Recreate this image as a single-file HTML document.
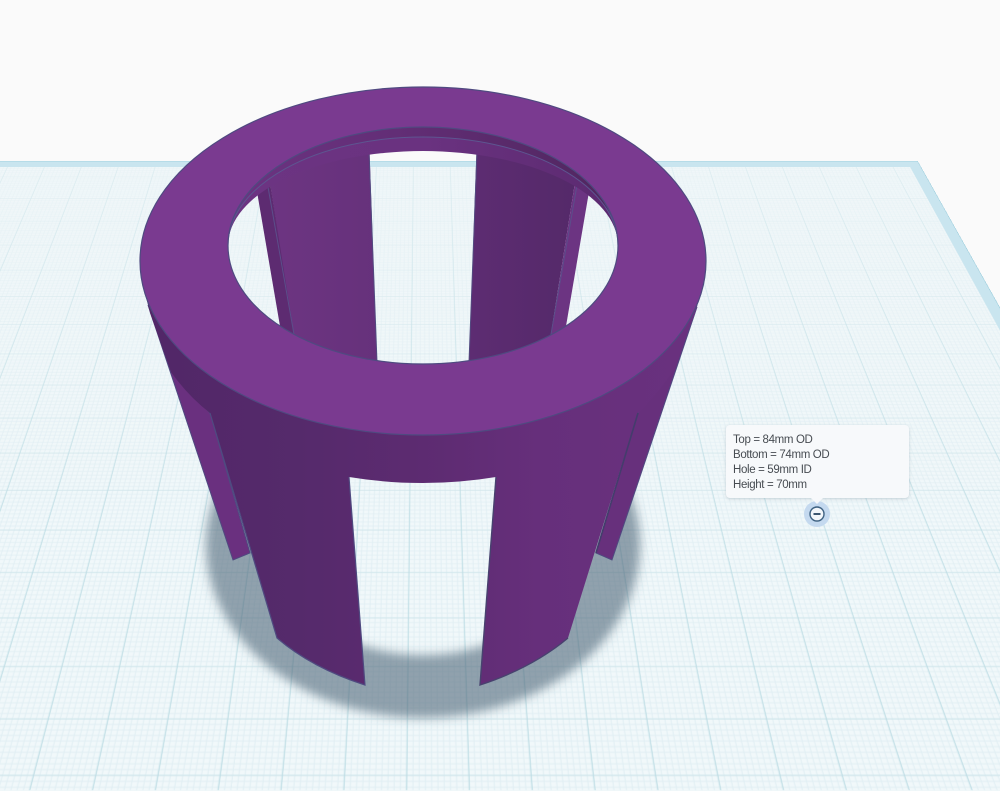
<!DOCTYPE html>
<html><head><meta charset="utf-8"><style>
html,body{margin:0;padding:0;width:1000px;height:791px;overflow:hidden;background:#fafafa}
#s{position:relative;width:1000px;height:791px;overflow:hidden;background:#fafafa}
#w{position:absolute;left:0;top:0;width:0;height:0;transform-origin:0 0;
transform:matrix3d(.62182,0,0,0, -.16597,.28251,0,-.00039238, 0,0,1,0, 423,176.86,0,1)}
#p{position:absolute;left:-1200px;top:-45.6px;width:2010px;height:1081px;background:#c9e5ef;box-sizing:border-box;border-top:2.5px solid #a9d5e3;border-right:1.6px solid #9fcfdd}
#g{position:absolute;left:-1200px;top:-27.6px;width:1992px;height:1063px;background-color:#f1f8fa;
background-image:
linear-gradient(90deg,#b9dbe3 0,#b9dbe3 1px,transparent 1px),
linear-gradient(180deg,#cde4ea 0,#cde4ea 1.1px,transparent 1.1px),
linear-gradient(90deg,#e0eef3 0,#e0eef3 1px,transparent 1px),
linear-gradient(180deg,#e0eef3 0,#e0eef3 1px,transparent 1px);
background-size:60px 60px,60px 60px,6px 6px,6px 6px;
background-position:43.8px 0,0 27.6px,1.8px 0,0 3.6px}
#e{position:absolute;left:0;top:788px;width:1000px;height:3px;background:#eff7f9}
svg{position:absolute;left:0;top:0}
#t{position:absolute;left:726px;top:425px;width:176px;height:73px;padding:0 0 0 7px;background:#f7f9fb;border-radius:4px;box-shadow:0 1px 3px rgba(60,80,100,.22);font:11.5px/15px "Liberation Sans",sans-serif;color:#474c52;letter-spacing:-.35px;box-sizing:content-box}
#t div:first-child{margin-top:8px}
#t div{white-space:nowrap}
</style></head><body><div id="s">
<div id="e"></div>
<div id="w"><div id="p"></div><div id="g"></div></div>
<svg width="1000" height="791" viewBox="0 0 1000 791">
<defs>
<filter id="b" x="-20%" y="-20%" width="140%" height="140%"><feGaussianBlur stdDeviation="5"/></filter>
<linearGradient id="fog" x1="0" y1="0" x2="0" y2="1"><stop offset="0" stop-color="#eef5f7" stop-opacity=".55"/><stop offset="1" stop-color="#eef5f7" stop-opacity="0"/></linearGradient>
<linearGradient id="fr" gradientUnits="userSpaceOnUse" x1="170" y1="0" x2="680" y2="0">
<stop offset="0" stop-color="#522768"/><stop offset=".25" stop-color="#552a6b"/><stop offset=".5" stop-color="#5d2b71"/><stop offset=".72" stop-color="#662f7b"/><stop offset="1" stop-color="#69317e"/></linearGradient>
<linearGradient id="il" gradientUnits="userSpaceOnUse" x1="265" y1="0" x2="380" y2="0"><stop offset="0" stop-color="#6d3582"/><stop offset="1" stop-color="#66317b"/></linearGradient>
<linearGradient id="ir" gradientUnits="userSpaceOnUse" x1="470" y1="0" x2="580" y2="0"><stop offset="0" stop-color="#5d2c72"/><stop offset="1" stop-color="#542969"/></linearGradient>
<linearGradient id="l1" gradientUnits="userSpaceOnUse" x1="228" y1="0" x2="618" y2="0"><stop offset="0" stop-color="#6b3381"/><stop offset=".4" stop-color="#632e77"/><stop offset="1" stop-color="#50265f"/></linearGradient>
<linearGradient id="l2" gradientUnits="userSpaceOnUse" x1="228" y1="0" x2="618" y2="0"><stop offset="0" stop-color="#6c3482"/><stop offset=".5" stop-color="#6a3280"/><stop offset="1" stop-color="#5b2a70"/></linearGradient>
<clipPath id="h"><ellipse cx="423" cy="245.5" rx="195" ry="118.5"/></clipPath>
<clipPath id="sc"><rect x="0" y="410" width="1000" height="381"/></clipPath>
</defs>
<path d="M0,167L910,167L1000,330L1000,520L0,520Z" fill="url(#fog)"/>
<g clip-path="url(#sc)"><path fill="#4a6276" fill-opacity=".58" fill-rule="evenodd" filter="url(#b)" d="M206,545a217,173 0 1 0 434,0a217,173 0 1 0 -434,0ZM253,510a170,145 0 1 0 340,0a170,145 0 1 0 -340,0Z"/></g>
<path d="M148,305L233,560L250,553L210,413L172,372Z" fill="#6a307f" stroke="#4f4a80" stroke-width="1"/>
<path d="M697,307L612,560L596,553L638,413Z" fill="#67307c" stroke="#4f4a80" stroke-width="1"/>
<path d="M143,285L150,313L171,372Q188,396 210,413L277,638Q312,668 365,685L349,477Q423,489 496,477L480,685Q532,668 568,638L638,413Q660,392 675,368L697,307L706,265L663,255A240,146 0 0 1 183,255Z" fill="url(#fr)"/>
<path d="M210,413L277,638Q312,668 365,685L349,477" fill="none" stroke="#4f4a80" stroke-width="1.2"/>
<path d="M496,477L480,685Q532,668 568,638" fill="none" stroke="#48426f" stroke-width="1.4"/>
<path d="M638,413L596,553" fill="none" stroke="#443c6c" stroke-width="1.6"/>
<g clip-path="url(#h)">
<path d="M268,170L369,135L377,365L294,340Z" fill="url(#il)"/>
<path d="M477,135L577,170L550,340L469,365Z" fill="url(#ir)"/>
<path d="M255,180L268,170L295,340L281,332Z" fill="#5d2b71"/>
<path d="M577,170L591,180L565,332L550,340Z" fill="#6c3482"/>
<path d="M268,187L295,340M577,185L550,340" stroke="#5b4e8a" stroke-width="1" fill="none"/>
<path d="M369,152L377,362M477,152L469,362" stroke="#524a80" stroke-width="1" fill="none"/>
<path d="M228,245.5A195,118.5 0 0 1 618,245.5A195,94.5 0 0 0 228,245.5Z" fill="url(#l2)"/>
<path d="M228,245.5A195,118.5 0 0 1 618,245.5A195,108.5 0 0 0 228,245.5Z" fill="url(#l1)"/>
<path d="M228,245.5A195,108.5 0 0 1 618,245.5" fill="none" stroke="#5d5590" stroke-width="1"/>
</g>
<path fill-rule="evenodd" fill="#7a3a90" stroke="#4f4a80" stroke-width="1.2" d="M140,261a283,174 0 1 0 566,0a283,174 0 1 0 -566,0ZM228,245.5a195,118.5 0 1 0 390,0a195,118.5 0 1 0 -390,0Z"/>
<circle cx="817" cy="514" r="13" fill="#c4d9ef"/>
<circle cx="817" cy="514" r="7" fill="#f2f6fa" stroke="#3f6282" stroke-width="1.4"/>
<rect x="813.5" y="513" width="7" height="2" fill="#3c5670"/>
</svg>
<div id="t"><div>Top = 84mm OD</div><div>Bottom = 74mm OD</div><div>Hole = 59mm ID</div><div>Height = 70mm</div></div>
<svg width="1000" height="791" viewBox="0 0 1000 791"><path d="M810,497L824,497L817,504Z" fill="#f7f9fb"/></svg>
</div></body></html>
